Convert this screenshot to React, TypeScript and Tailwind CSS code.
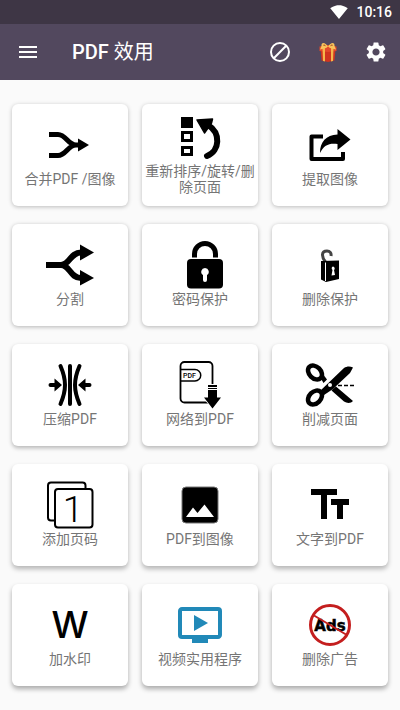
import type { ReactNode } from 'react';
import {
  MdMenu,
  MdOndemandVideo,
  MdSettings,
  MdSignalWifi4Bar,
  MdTextFields,
} from 'react-icons/md';

function Icon({ children }: { children: ReactNode }) {
  return (
    <svg className="size-12 overflow-visible" viewBox="0 0 48 48" aria-hidden="true">
      {children}
    </svg>
  );
}

function MergeIcon() {
  return (
    <Icon>
      <path
        d="M3 13.5h9c8 0 10 10.5 18 10.5h4M3 34.5h9c8 0 10-10.5 18-10.5"
        fill="none"
        stroke="#000"
        strokeWidth="5"
      />
      <path d="M32 17.5 43 24l-11 6.5z" />
    </Icon>
  );
}

function ReorderIcon() {
  return (
    <Icon>
      <path d="M5 4h12v11H5z" />
      <path
        d="M6.5 19.5h9v8h-9zM6.5 34.5h9v7h-9z"
        fill="none"
        stroke="#000"
        strokeWidth="3"
      />
      <path
        d="M21 7 36.5 6l-1 4-7 10z"
        stroke="#000"
        strokeWidth="1.5"
        strokeLinejoin="round"
      />
      <path
        d="M32 12c13 8 12 26-1 31"
        fill="none"
        stroke="#000"
        strokeWidth="6"
        strokeLinecap="round"
      />
    </Icon>
  );
}

function ExtractIcon() {
  return (
    <Icon>
      <path
        d="M17 15.5H5.5V38H37v-7"
        fill="none"
        stroke="#000"
        strokeWidth="4"
        strokeLinejoin="round"
      />
      <path d="M31.5 8 44.5 18.5 31.5 29v-6C23 22 18 24 14 32c0-11 6-18 17.5-18.5z" />
    </Icon>
  );
}

function SplitIcon() {
  return (
    <Icon>
      <path
        d="M0 24h15c9 0 9-12.5 20-12.5M15 24c9 0 9 13 20 13"
        fill="none"
        stroke="#000"
        strokeWidth="6"
      />
      <path d="M34 3.5 48 11.5l-14 8zM34 29l14 8-14 7.5z" />
    </Icon>
  );
}

function LockIcon() {
  return (
    <Icon>
      <path
        d="M18.5 16.5v-3.5a10.5 10.5 0 0 1 21 0v3.5"
        fill="none"
        stroke="#000"
        strokeWidth="5"
      />
      <rect x="11" y="18" width="36" height="29.5" rx="4" />
      <path
        d="M29 27a3.8 3.8 0 0 1 2 7v5a2 2 0 0 1-4 0v-5a3.8 3.8 0 0 1 2-7z"
        fill="#fff"
      />
    </Icon>
  );
}

function UnlockIcon() {
  return (
    <Icon>
      <path
        d="M19.5 21c-4-5-4.5-11 1.5-11 3 0 4.5 2 4 5"
        fill="none"
        stroke="#444"
        strokeWidth="3"
      />
      <path d="M15 20l18-.5V38L20 41l-5-2.500z" />
      <path d="M19.5 21.5V40" stroke="#fff" strokeWidth="1" />
      <path
        d="M27 25.5a2 2 0 0 1 1 3.5l1 5-3.5.5L26.5 29a2 2 0 0 1 .5-3.5z"
        fill="#fff"
      />
    </Icon>
  );
}

function CompressIcon() {
  return (
    <Icon>
      <path
        d="M14.500 5c6 14 6 24 0 38M24 5v38M33.500 5c-6 14-6 24 0 38"
        fill="none"
        stroke="#000"
        strokeWidth="4"
        strokeLinecap="round"
      />
      <path
        d="M4.500 24h5M38.500 24h5"
        stroke="#000"
        strokeWidth="4"
        strokeLinecap="round"
      />
      <path d="M8.500 17.500 16 24l-7.500 6.500zM39.500 17.500 32 24l7.500 6.500z" />
    </Icon>
  );
}

function WebToPdfIcon() {
  return (
    <Icon>
      <rect
        x="4.5"
        y="1"
        width="32"
        height="40.5"
        rx="4"
        fill="none"
        stroke="#000"
        strokeWidth="1.8"
      />
      <path
        d="M4.5 8.500h14.500a5.700 5.700 0 0 1 0 11.500h-14.500"
        fill="none"
        stroke="#000"
        strokeWidth="1.5"
      />
      <text
        x="13.5"
        y="17"
        textAnchor="middle"
        className="font-[Roboto,sans-serif] text-[7px] font-medium"
      >
        PDF
      </text>
      <path d="M31 23h11v14h4l-9.500 11L27 37h4z" fill="#fff" />
      <path d="M32 24h9v2h-9zM32 27h9v1h-9zM32 29h9v7.500h4L36.500 47.500 28 36.500h4z" />
    </Icon>
  );
}

function ScissorsIcon() {
  return (
    <Icon>
      <g fill="none" stroke="#000" strokeWidth="4.5">
        <ellipse cx="9" cy="11.5" rx="8" ry="5.8" transform="rotate(45 9 11.5)" />
        <ellipse cx="9" cy="36.5" rx="8" ry="5.8" transform="rotate(-45 9 36.5)" />
      </g>
      <path d="M14 16l4-1.5 3 4-3.5 3.5zM14 30 38 7c3-2 6-2 9-.5L44 12 27 28l-9 6zM30 25.5 47 40c-2 2.5-6 2.5-9 .5L25.5 29.500z" />
      <circle cx="24" cy="24" r="2" fill="#fff" />
      <path d="M32 24.5h16" stroke="#000" strokeWidth="1.5" strokeDasharray="4 2" />
    </Icon>
  );
}

function PageNumberIcon() {
  return (
    <Icon>
      <g fill="#fff" stroke="#000" strokeWidth="2">
        <rect x="2" y="1.5" width="37.5" height="38" rx="3" />
        <rect x="9" y="8" width="37.5" height="38.5" rx="3" />
      </g>
      <text
        x="27"
        y="41"
        textAnchor="middle"
        className="font-[Roboto,sans-serif] text-[37px] font-light"
      >
        1
      </text>
    </Icon>
  );
}

function PictureIcon() {
  return (
    <Icon>
      <rect
        x="6"
        y="6"
        width="36"
        height="36"
        rx="4"
        stroke="#777"
        strokeWidth="1"
      />
      <path d="M10 36l7-9.5 4.5 5.5 7-8.5L38 36z" fill="#fff" />
    </Icon>
  );
}

function WatermarkIcon() {
  return (
    <Icon>
      <text
        x="24"
        y="37"
        textAnchor="middle"
        className="font-[Inter,sans-serif] text-[37px] font-medium"
      >
        W
      </text>
    </Icon>
  );
}

function NoAdsIcon() {
  return (
    <Icon>
      <text
        x="24"
        y="30"
        textAnchor="middle"
        stroke="#000"
        strokeWidth="0.5"
        className="font-['DejaVu_Sans',sans-serif] text-[15px] font-bold"
      >
        Ads
      </text>
      <g fill="none" stroke="#c41e1e">
        <circle cx="24" cy="24" r="19.5" strokeWidth="3" />
        <path d="M8 14.5l32 19" strokeWidth="2" />
      </g>
    </Icon>
  );
}

function GiftIcon() {
  return (
    <svg className="size-6" viewBox="0 0 24 24" aria-hidden="true">
      <path d="M4.5 9h15l-1 11.5L12 22l-6.5-1.5z" fill="#d0341f" />
      <path d="M3.5 6.5 12 5l8.5 1.5V11L12 12l-8.5-1z" fill="#e2492b" />
      <path d="M6.5 8H9v13.5l-2-.5zM15 8h2.5L17 21l-2 .5z" fill="#f6b64b" />
      <path
        d="M12 6.5C9 1.5 5 2 5.5 6L4 9.5 10 8l2-1.5 2 1.5 6 1.5L18.500 6C19 2 15 1.5 12 6.5z"
        fill="#f9c45c"
      />
      <path d="M7 5.500c.5-1.500 2-1 3 .8zM17 5.500c-.5-1.500-2-1-3 .8z" fill="#b5602a" />
    </svg>
  );
}

const tools = [
  { label: '合并PDF /图像', icon: <MergeIcon /> },
  { label: '重新排序/旋转/删除页面', icon: <ReorderIcon /> },
  { label: '提取图像', icon: <ExtractIcon /> },
  { label: '分割', icon: <SplitIcon /> },
  { label: '密码保护', icon: <LockIcon /> },
  { label: '删除保护', icon: <UnlockIcon /> },
  { label: '压缩PDF', icon: <CompressIcon /> },
  { label: '网络到PDF', icon: <WebToPdfIcon /> },
  { label: '削减页面', icon: <ScissorsIcon /> },
  { label: '添加页码', icon: <PageNumberIcon /> },
  { label: 'PDF到图像', icon: <PictureIcon /> },
  { label: '文字到PDF', icon: <MdTextFields className="size-12 text-black" /> },
  { label: '加水印', icon: <WatermarkIcon /> },
  {
    label: '视频实用程序',
    icon: <MdOndemandVideo className="size-12 text-[#2189b8]" />,
  },
  { label: '删除广告', icon: <NoAdsIcon /> },
];

// shadows get deeper further down the screen
const rowShadows = [
  'shadow-[0_1px_4px_rgba(0,0,0,0.25)]',
  'shadow-[0_1px_4px_rgba(0,0,0,0.28)]',
  'shadow-[0_2px_4px_rgba(0,0,0,0.28)]',
  'shadow-[0_3px_5px_rgba(0,0,0,0.28)]',
  'shadow-[0_3px_5px_rgba(0,0,0,0.32)]',
];

function Header() {
  return (
    <header className="text-white">
      <div className="flex h-6 items-center justify-end gap-2 bg-[#3e3645] px-2">
        <MdSignalWifi4Bar className="size-[18px]" />
        <span className="text-sm font-medium">10:16</span>
      </div>
      <div className="flex h-14 items-center bg-[#52485e]">
        <button className="flex h-14 w-14 items-center justify-center" aria-label="Menu">
          <MdMenu className="size-6" />
        </button>
        <h1 className="flex-1 pl-4 text-xl font-medium">
          PDF <span className="font-normal">效用</span>
        </h1>
        <button className="flex size-12 items-center justify-center" aria-label="Block">
          <svg className="size-6" viewBox="0 0 24 24" fill="none" stroke="#fff" strokeWidth="2">
            <circle cx="12" cy="12" r="9" />
            <path d="M5.8 18.2 18.2 5.8" />
          </svg>
        </button>
        <button className="flex size-12 items-center justify-center" aria-label="Gift">
          <GiftIcon />
        </button>
        <button className="flex size-12 items-center justify-center" aria-label="Settings">
          <MdSettings className="size-6" />
        </button>
      </div>
    </header>
  );
}

function App() {
  return (
    <div className="min-h-screen bg-[#fafafa] font-[Roboto,'Noto_Sans_CJK_SC',sans-serif]">
      <Header />
      <main className="grid grid-cols-3 gap-x-3.5 gap-y-[18px] px-3 py-6">
        {tools.map((tool, index) => (
          <button
            key={tool.label}
            className={`flex min-h-[102px] flex-col items-center justify-center rounded-md bg-white px-0.5 ${rowShadows[Math.floor(index / 3)]}`}
          >
            {tool.icon}
            <span className="py-0.5 text-sm leading-4 text-[#757575]">{tool.label}</span>
          </button>
        ))}
      </main>
    </div>
  );
}

export default App;
